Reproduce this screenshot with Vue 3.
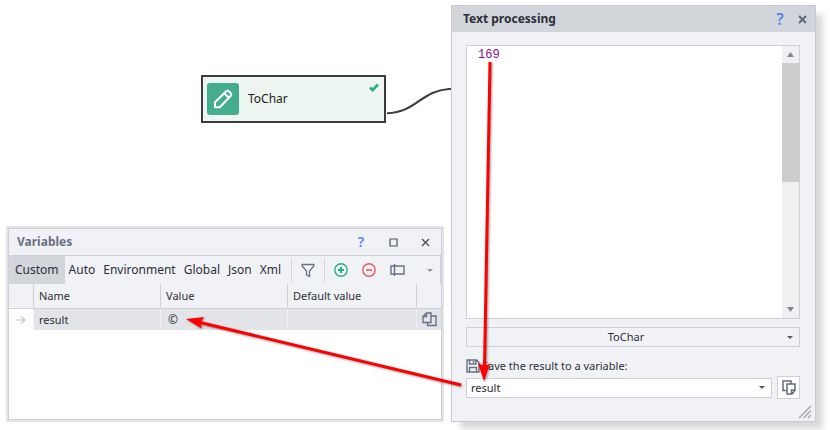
<script setup>
import { ref } from 'vue'

const tabs = ['Custom', 'Auto', 'Environment', 'Global', 'Json', 'Xml']
const activeTab = ref('Custom')
const variables = [{ name: 'result', value: '©', initial: '' }]
const source = ref('169')
const action = ref('ToChar')
const target = ref('result')
</script>

<template>
  <main class="desktop">
    <svg class="link" width="66" height="28" viewBox="0 0 66 28" aria-hidden="true">
      <path d="M1 25.300C32 24 34 2 66 .8" fill="none" stroke="#3c3c3c" stroke-width="2" />
    </svg>

    <section class="node">
      <span class="node-icon">
        <svg width="32" height="32" viewBox="0 0 32 32" fill="none" stroke="#fff" stroke-width="2" stroke-linejoin="round">
          <path d="M8 24.2V19.2L19.2 8.2Q20.5 7.2 21.8 8.2L23.8 10.2Q24.9 11.5 23.8 12.8L12.8 24.2ZM17.4 10.4L21.8 14.8" />
        </svg>
      </span>
      <span class="node-name">ToChar</span>
      <svg class="node-state" width="10" height="9" viewBox="0 0 10 9" aria-hidden="true">
        <path d="M1 4.400L3.700 7L9 1.600" fill="none" stroke="#27b08b" stroke-width="2.800" />
      </svg>
    </section>

    <section class="window variables">
      <div class="variables-body">
        <header class="titlebar">
          <h2>Variables</h2>
          <button class="icon help" aria-label="Help">?</button>
          <button class="icon" aria-label="Maximize">
            <svg width="9" height="9" viewBox="0 0 9 9"><path d="M1 1H8V8H1Z" fill="none" stroke="#4a505c" stroke-width="1.2" /></svg>
          </button>
          <button class="icon" aria-label="Close">
            <svg width="9" height="9" viewBox="0 0 9 9"><path d="M1 1L8 8M8 1L1 8" fill="none" stroke="#4a505c" stroke-width="1.4" /></svg>
          </button>
        </header>
        <nav class="toolbar">
          <button
            v-for="tab in tabs"
            :key="tab"
            class="tab"
            :class="{ active: tab === activeTab }"
            @click="activeTab = tab"
          >{{ tab }}</button>
          <span class="tools">
            <button class="icon filter" aria-label="Filter">
              <svg width="14" height="15" viewBox="0 0 14 15"><path d="M1.2 1.5H12.8V3L8.500 8V13.500L5.500 11.800V8L1.200 3Z" fill="none" stroke="#667085" stroke-width="1.3" /></svg>
            </button>
            <button class="icon tool" aria-label="Add">
              <svg width="14" height="14" viewBox="0 0 14 14" fill="none" stroke="#27ae8b"><circle cx="7" cy="7" r="6.2" stroke-width="1.4" /><path d="M4 7H10M7 4V10" stroke-width="2" /></svg>
            </button>
            <button class="icon tool" aria-label="Remove">
              <svg width="14" height="14" viewBox="0 0 14 14" fill="none" stroke="#ee5555"><circle cx="7" cy="7" r="6.2" stroke-width="1.4" /><path d="M4 7H10" stroke-width="1.6" /></svg>
            </button>
            <button class="icon tool" aria-label="Rename">
              <svg width="15" height="14" viewBox="0 0 15 14" fill="none" stroke="#667085" stroke-width="1.4"><path d="M4.500 1V13M1 3H14V11H1Z" /></svg>
            </button>
            <button class="icon more" aria-label="More">
              <svg width="6" height="3" viewBox="0 0 6 3"><path d="M0 0H6L3 3Z" fill="#8f939b" /></svg>
            </button>
          </span>
        </nav>
        <table>
          <colgroup>
            <col class="mark" /><col class="col" /><col class="col" /><col /><col class="copy-col" />
          </colgroup>
          <thead>
            <tr><th></th><th>Name</th><th>Value</th><th>Default value</th><th></th></tr>
          </thead>
          <tbody>
            <tr v-for="row in variables" :key="row.name">
              <td>
                <svg width="24" height="10" viewBox="0 0 24 10"><path d="M7 5H16M12.5 1.5L16 5L12.5 8.5" fill="none" stroke="#c2c4c8" stroke-width="1.1" /></svg>
              </td>
              <td>{{ row.name }}</td>
              <td class="value">{{ row.value }}</td>
              <td>{{ row.initial }}</td>
              <td>
                <button class="icon" aria-label="Copy">
                  <svg width="15" height="15" viewBox="0 0 15 15" fill="none" stroke="#667085" stroke-width="1.4"><path d="M4.500 1H9V10.500H1V4.500ZM4.500 1V4.500H1M9 4H14V13.500H5.500V10.500" /></svg>
                </button>
              </td>
            </tr>
          </tbody>
        </table>
      </div>
    </section>

    <section class="window dialog">
      <header class="titlebar">
        <h2>Text processing</h2>
        <button class="icon help" aria-label="Help">?</button>
        <button class="icon" aria-label="Close">
          <svg width="9" height="9" viewBox="0 0 9 9"><path d="M1 1L8 8M8 1L1 8" fill="none" stroke="#5f6b7c" stroke-width="1.9" /></svg>
        </button>
      </header>
      <div class="form">
        <div class="editor">
          <textarea v-model="source" aria-label="Text" spellcheck="false"></textarea>
          <div class="scrollbar" aria-hidden="true">
            <svg width="17" height="17" viewBox="0 0 17 17"><path d="M5 11H12L8.5 6Z" fill="#858590" /></svg>
            <span class="thumb"></span>
            <svg width="17" height="17" viewBox="0 0 17 17"><path d="M5 6H12L8.5 11Z" fill="#858590" /></svg>
          </div>
        </div>
        <div class="dropdown action">
          <select v-model="action" aria-label="Action"><option>ToChar</option></select>
          <svg width="6" height="3" viewBox="0 0 6 3"><path d="M0 0H6L3 3Z" fill="#555b66" /></svg>
        </div>
        <label class="save" for="target">
          <svg width="14" height="14" viewBox="0 0 14 14" fill="none" stroke="#667085" stroke-width="1.4"><path d="M1 1H10.500L13 3.500V13H1ZM3.500 1V5H10V1M3.500 13V8.500H10.500V13M7.500 2V4" /></svg>
          Save the result to a variable:
        </label>
        <div class="target">
          <div class="dropdown">
            <select id="target" v-model="target"><option>result</option></select>
            <svg width="6" height="3" viewBox="0 0 6 3"><path d="M0 0H6L3 3Z" fill="#555b66" /></svg>
          </div>
          <button class="copy" aria-label="Copy variable">
            <svg width="14" height="15" viewBox="0 0 14 15" fill="none" stroke="#5f6b80" stroke-width="1.5"><path d="M4 10.500H1V1H9V3.500M5 4H13V10.500L10 14H5ZM13 10H9.500V14" /></svg>
          </button>
        </div>
      </div>
      <svg class="grip" width="14" height="14" viewBox="0 0 14 14" aria-hidden="true">
        <path d="M1 13L13 1M5.5 13L13 5.5M10 13L13 10" stroke="#a9abaf" stroke-width="1.6" />
      </svg>
    </section>

    <svg class="arrows" width="320" height="340" viewBox="180 55 320 340" aria-hidden="true">
      <g fill="#f00" stroke="#f00">
        <path d="M490 62L484.5 368" stroke-width="3" />
        <path d="M461 385L200 322.5" stroke-width="3" />
        <path d="M484 381.5L478 363L484 366L490 363.5Z" stroke="none" />
        <path d="M186 319L204 317L200.5 322.5L201.5 328.5Z" stroke="none" />
      </g>
    </svg>
  </main>
</template>

<style>
body {
  background: #fff;
}
</style>

<style scoped>
.desktop {
  position: relative;
  min-height: 100vh;
  overflow: hidden;
  font: 12px/16px Tahoma, "Noto Sans", sans-serif;
  color: #2b2f3a;
}
.desktop * {
  box-sizing: border-box;
}
svg {
  display: block;
  flex: none;
}
button,
select,
textarea {
  margin: 0;
  padding: 0;
  border: 0;
  border-radius: 0;
  background: none;
  font: inherit;
  color: inherit;
}
h2 {
  flex: 1;
  margin: 0;
  font-size: 12px;
  line-height: 16px;
}
.link {
  position: absolute;
  left: 386px;
  top: 88px;
}
.node {
  position: absolute;
  left: 201px;
  top: 75px;
  width: 185px;
  display: flex;
  align-items: center;
  gap: 9px;
  padding: 6px 5px 6px 4px;
  border: 2px solid #3c3c3c;
  background: #eef6f2;
  color: #222;
}
.node-icon {
  border-radius: 3px;
  background: #44ad90;
}
.node-name {
  flex: 1;
}
.node-state {
  align-self: flex-start;
}
.window {
  position: absolute;
}
.titlebar {
  display: flex;
  align-items: center;
}
.icon {
  display: flex;
  align-items: center;
  justify-content: center;
}
.help {
  color: #5586f5;
  font-size: 14px;
  font-weight: 600;
}
.variables {
  left: 6px;
  top: 226px;
  width: 438px;
  border: 2px solid #e2e4e9;
}
.variables-body {
  min-height: 192px;
  border: 1px solid #cdd0d9;
  background: #fff;
}
.variables .titlebar {
  height: 27px;
  padding-left: 8px;
  border-bottom: 1px solid #cdd0d9;
  background: #f1f2f6;
  color: #68717f;
}
.variables .titlebar .icon {
  width: 32px;
}
.toolbar {
  display: flex;
  height: 28px;
  background: #f1f2f6;
  border-right: 1px solid #d3d5dc;
}
.tab {
  padding: 0 4px;
}
.tab.active {
  padding: 0 6px;
  background: #d2d5da;
}
.tools {
  flex: 1;
  display: flex;
  align-items: center;
}
.filter {
  width: 34px;
  height: 24px;
  border: solid #d3d5dc;
  border-width: 0 1px;
  margin: 0 2px 0 6px;
}
.tool {
  width: 28px;
}
.more {
  width: 20px;
  margin-left: auto;
}
table {
  width: 100%;
  table-layout: fixed;
  border-collapse: separate;
  border-spacing: 0;
  font-size: 11px;
}
.mark {
  width: 25px;
}
.col {
  width: 127px;
}
.copy-col {
  width: 24px;
}
th {
  height: 25px;
  padding: 0 5px;
  border: solid #cdd0d9;
  border-width: 0 1px 1px 0;
  background: #f1f2f6;
  font-weight: normal;
  text-align: left;
}
td {
  height: 21px;
  padding: 0 5px;
  border-right: 1px solid #eff0f4;
  background: #e3e4e8;
}
td:first-child {
  padding: 0;
  background: #fff;
}
td:last-child {
  padding: 0 0 0 5px;
}
th:last-child,
td:last-child {
  border-right: 0;
}
.value {
  padding-left: 7px;
  font-size: 12px;
}
.dialog {
  left: 451px;
  top: 5px;
  width: 365px;
  border: 1px solid #c7cad2;
  background: #f1f2f6;
  box-shadow: 8px 8px 6px -1px #dadada;
}
.dialog .titlebar {
  height: 26px;
  padding: 0 2px 0 11px;
  background: #d2d5da;
}
.dialog .titlebar .icon {
  width: 22px;
}
.dialog .help {
  font-size: 16px;
}
.form {
  display: grid;
  padding: 13px 15px 22px 14px;
  font-size: 11px;
}
.editor {
  display: flex;
  height: 274px;
  border: 1px solid #cdd0d9;
  background: #fff;
}
textarea {
  flex: 1;
  min-width: 0;
  padding: 1px 11px;
  resize: none;
  outline: 0;
  font: 12px/16px "Liberation Mono", monospace;
  color: #85108f;
}
.scrollbar {
  display: flex;
  flex-direction: column;
  width: 17px;
  background: #f0f0f0;
}
.thumb {
  height: 119px;
  margin-bottom: auto;
  background: #cdcdcd;
}
.dropdown {
  flex: 1;
  display: grid;
  align-items: center;
  height: 20px;
  border: 1px solid #cdd0d9;
  background: #fff;
}
.dropdown select {
  grid-area: 1 / 1;
  height: 18px;
  padding: 0 18px 0 4px;
  appearance: none;
}
.dropdown svg {
  grid-area: 1 / 1;
  justify-self: end;
  margin-right: 6px;
  pointer-events: none;
}
.action {
  margin-top: 8px;
  background: #f1f2f6;
}
.action select {
  text-align-last: center;
}
.save {
  display: flex;
  align-items: center;
  gap: 2px;
  height: 16px;
  margin-top: 11px;
}
.target {
  display: flex;
  align-items: center;
  gap: 5px;
  margin-top: 2px;
}
.copy {
  display: grid;
  place-items: center;
  width: 23px;
  height: 23px;
  border: 1px solid #cdd0d9;
  background: #fff;
}
.grip {
  position: absolute;
  right: 3px;
  bottom: 2px;
}
.arrows {
  position: absolute;
  left: 180px;
  top: 55px;
  pointer-events: none;
  filter: drop-shadow(1px 1px 1px #0006);
}
</style>
